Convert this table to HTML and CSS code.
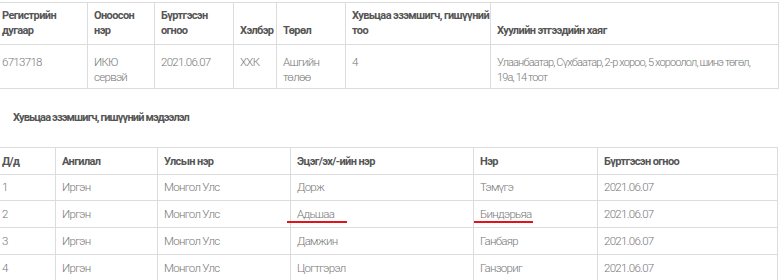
FILE: index.html
```html
<!DOCTYPE html>
<html lang="mn">
<head>
<meta charset="utf-8">
<title>Хувьцаа эзэмшигч</title>
<link rel="stylesheet" href="styles.css">
</head>
<body>
<div class="page">
  <table class="grid grid-company">
    <colgroup>
      <col class="c-reg"><col class="c-name"><col class="c-date"><col class="c-form"><col class="c-type"><col class="c-count"><col class="c-addr">
    </colgroup>
    <thead>
      <tr>
        <th>Регистрийн<br>дугаар</th>
        <th>Оноосон<br>нэр</th>
        <th>Бүртгэсэн<br>огноо</th>
        <th>Хэлбэр</th>
        <th>Төрөл</th>
        <th>Хувьцаа эзэмшигч, гишүүний<br>тоо</th>
        <th>Хуулийн этгээдийн хаяг</th>
      </tr>
    </thead>
    <tbody>
      <tr>
        <td>6713718</td>
        <td>ИКЮ<br>сервэй</td>
        <td>2021.06.07</td>
        <td>ХХК</td>
        <td>Ашгийн<br>төлөө</td>
        <td>4</td>
        <td class="addr">Улаанбаатар, Сүхбаатар, 2-р хороо, 5 хороолол, шинэ төгөл,<br>19а, 14 тоот</td>
      </tr>
    </tbody>
  </table>

  <h3 class="section-title">Хувьцаа эзэмшигч, гишүүний мэдээлэл</h3>

  <table class="grid grid-members">
    <colgroup>
      <col class="m-no"><col class="m-cat"><col class="m-country"><col class="m-parent"><col class="m-name"><col class="m-date">
    </colgroup>
    <thead>
      <tr>
        <th>Д/д</th>
        <th>Ангилал</th>
        <th>Улсын нэр</th>
        <th>Эцэг/эх/-ийн нэр</th>
        <th>Нэр</th>
        <th>Бүртгэсэн огноо</th>
      </tr>
    </thead>
    <tbody>
      <tr class="r-short"><td>1</td><td>Иргэн</td><td>Монгол Улс</td><td>Дорж</td><td>Тэмүгэ</td><td>2021.06.07</td></tr>
      <tr><td>2</td><td>Иргэн</td><td>Монгол Улс</td><td><span class="mark mark-a">Адьшаа</span></td><td><span class="mark mark-b">Биндэрьяа</span></td><td>2021.06.07</td></tr>
      <tr><td>3</td><td>Иргэн</td><td>Монгол Улс</td><td>Дамжин</td><td>Ганбаяр</td><td>2021.06.07</td></tr>
      <tr><td>4</td><td>Иргэн</td><td>Монгол Улс</td><td>Цогтгэрэл</td><td>Ганзориг</td><td>2021.06.07</td></tr>
    </tbody>
  </table>
</div>
</body>
</html>
```
FILE: styles.css
```css
html, body {
  margin: 0;
  padding: 0;
  background: #fff;
}
body {
  font-family: Roboto, "Noto Sans", sans-serif;
  overflow: hidden;
}
.page {
  padding-top: 2px;
}
.grid {
  border-collapse: collapse;
  table-layout: fixed;
  margin-left: -5px;
}
.grid th,
.grid td {
  border: 1px solid #dcdcdc;
  padding: 0 6px;
  text-align: left;
  line-height: 15px;
  white-space: nowrap;
  overflow: visible;
}
.grid th {
  font-weight: 700;
  font-size: 11px;
  letter-spacing: -0.6px;
  color: #555;
}
.grid td {
  font-weight: 300;
  font-size: 11.5px;
  letter-spacing: -0.7px;
  color: #777;
}
.grid-company {
  width: 783px;
}
.c-reg { width: 92px; }
.c-name { width: 67px; }
.c-date { width: 79px; }
.c-form { width: 43px; }
.c-type { width: 69px; }
.c-count { width: 145px; }
.c-addr { width: 288px; }

.grid-company thead tr { height: 42px; }
.grid-company th {
  vertical-align: bottom;
  padding-bottom: 6px;
}
.grid-company tbody tr { height: 43px; }
.grid-company td {
  vertical-align: top;
  padding-top: 10px;
  padding-bottom: 3px;
}
.grid-company td.addr {
  font-size: 11px;
  letter-spacing: -0.85px;
}

.section-title {
  margin: 21px 0 21px 13px;
  font-size: 11px;
  line-height: 16px;
  font-weight: 700;
  letter-spacing: -0.85px;
  color: #555;
}

.grid-members {
  width: 782px;
}
.m-no { width: 60px; }
.m-cat { width: 102px; }
.m-country { width: 133px; }
.m-parent { width: 183px; }
.m-name { width: 124px; }
.m-date { width: 180px; }
.grid-members th,
.grid-members td {
  vertical-align: middle;
}
.grid-members thead tr { height: 27px; }
.grid-members tbody tr { height: 27px; }
.grid-members tbody tr.r-short { height: 26px; }

.mark {
  position: relative;
}
.mark::after {
  content: "";
  position: absolute;
  top: 14px;
  height: 2px;
  background: #e0141b;
}
.mark-a::after {
  left: -10px;
  width: 60px;
}
.mark-b::after {
  left: -6px;
  width: 59px;
}
```
